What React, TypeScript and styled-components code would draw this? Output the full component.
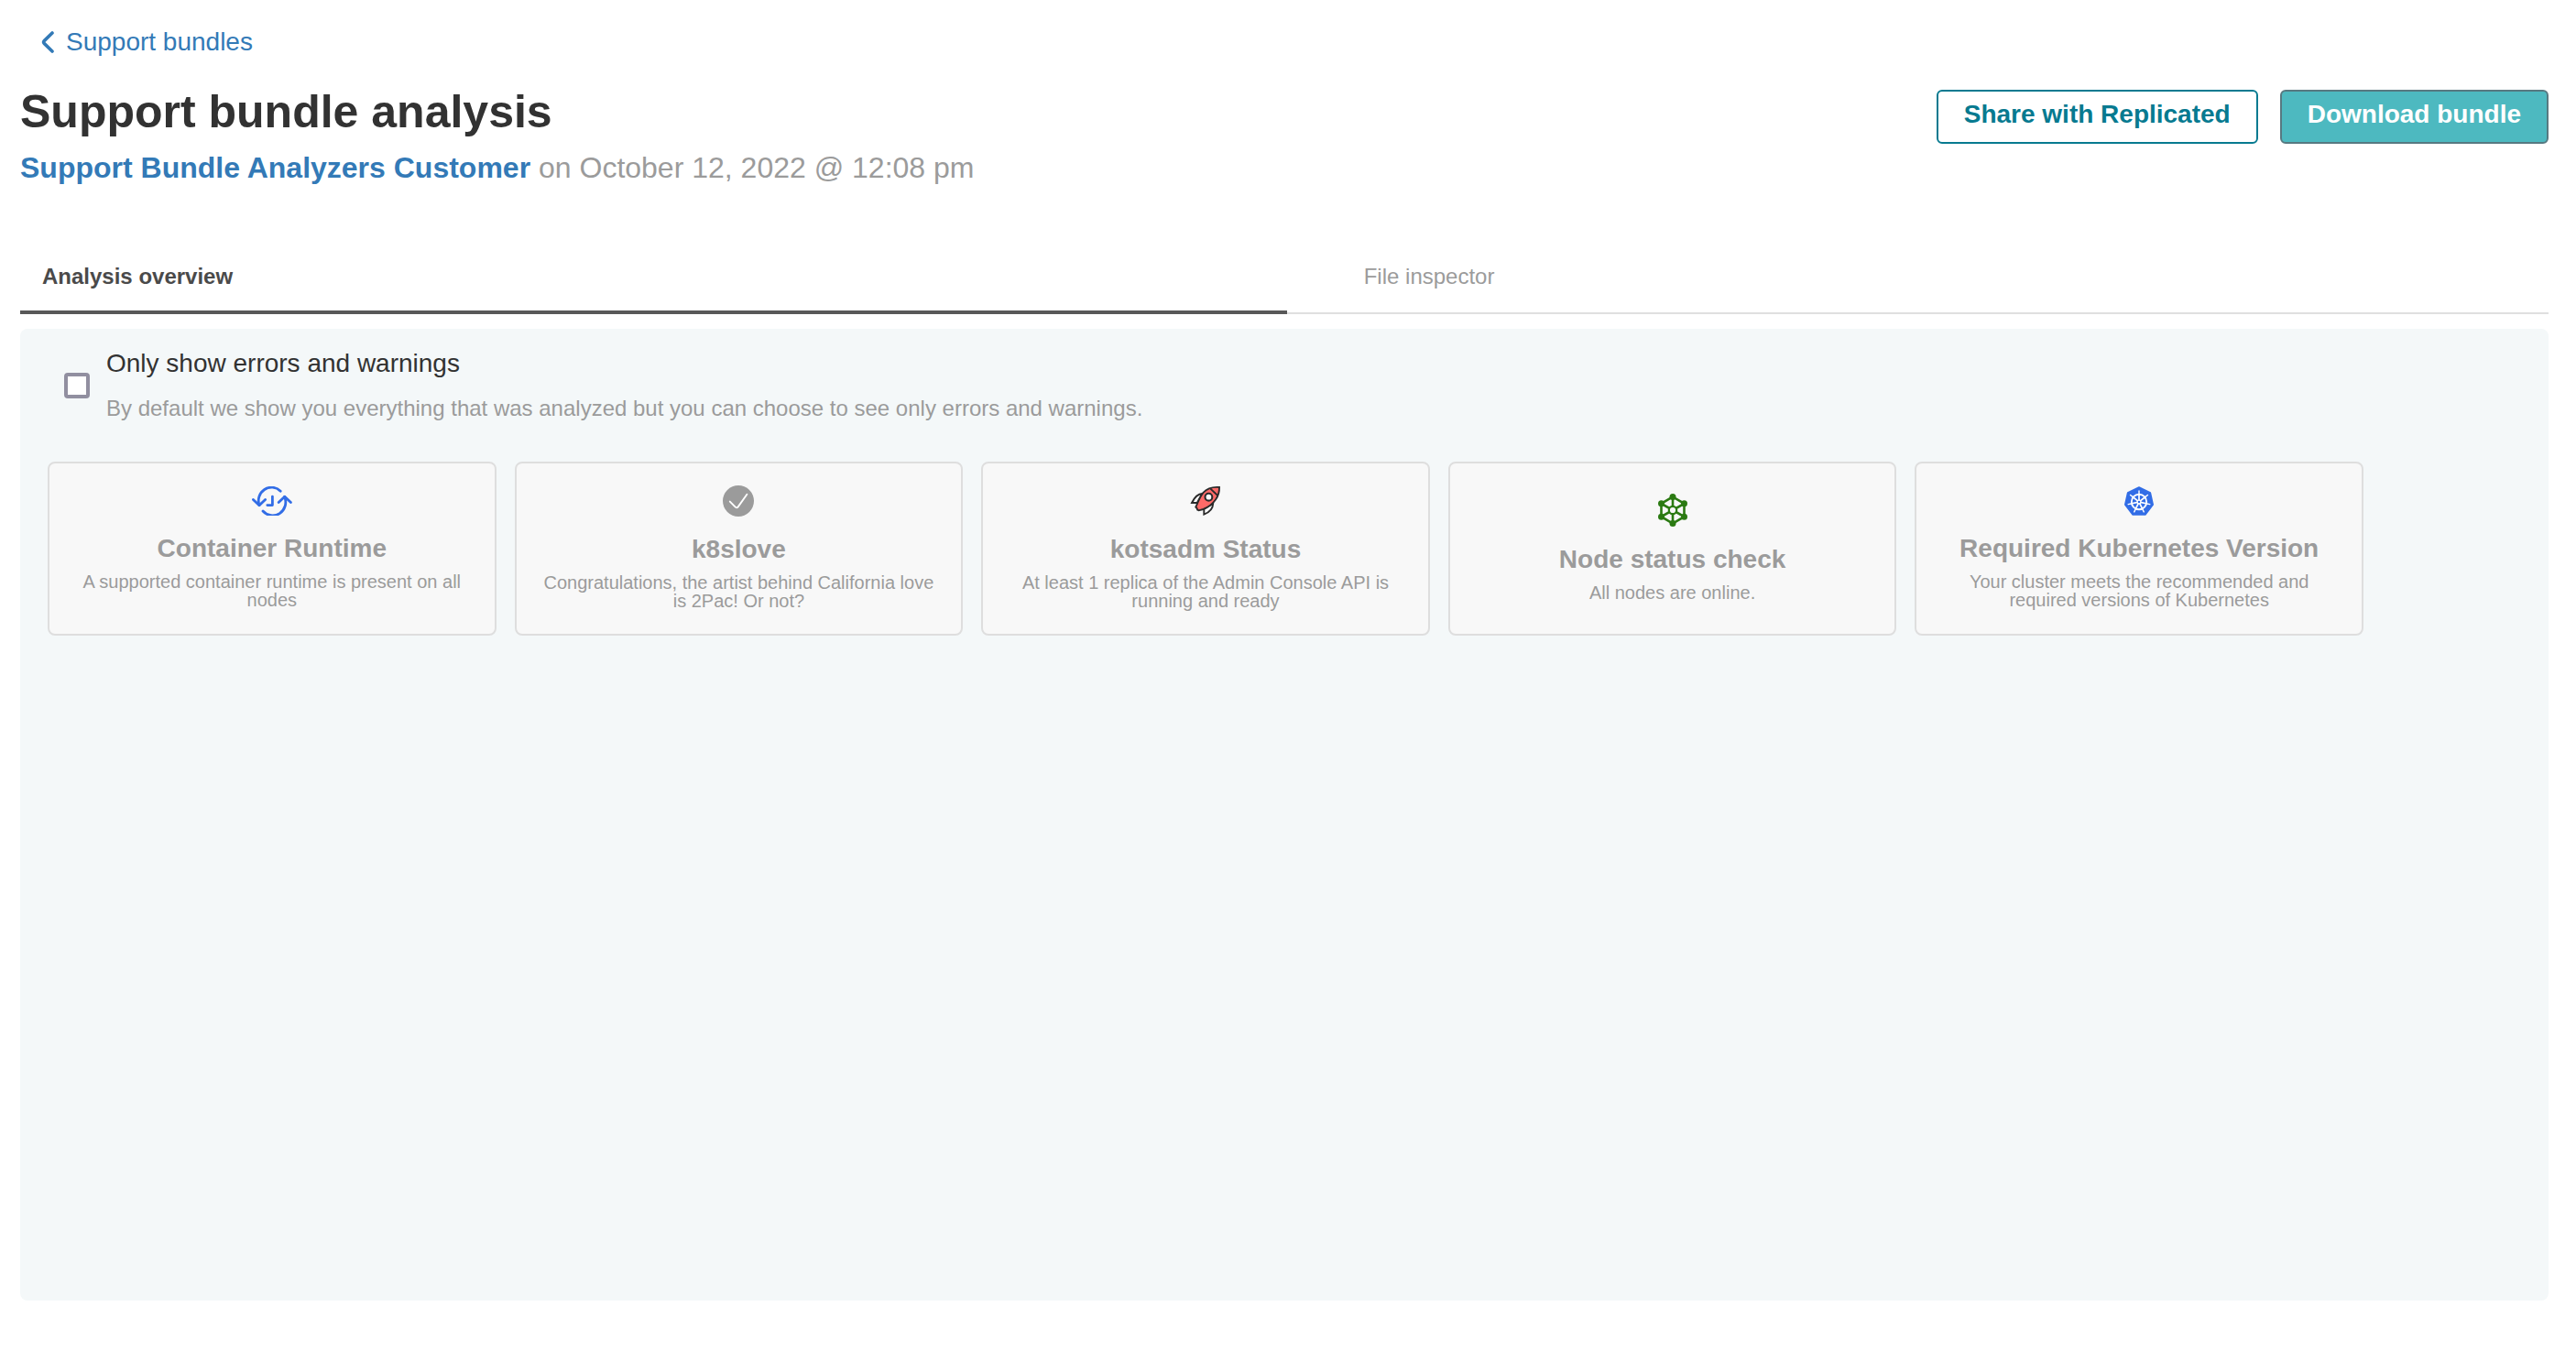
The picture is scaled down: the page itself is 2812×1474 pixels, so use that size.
import React, { useState } from "react";
import styled, { createGlobalStyle } from "styled-components";

const GlobalStyle = createGlobalStyle`
  *, *::before, *::after { box-sizing: border-box; }
  body {
    margin: 0;
    background: #ffffff;
    font-family: "Liberation Sans", Arial, Helvetica, sans-serif;
    -webkit-font-smoothing: antialiased;
  }
`;

const Page = styled.main`
  display: flex;
  flex-direction: column;
  min-height: 100vh;
  padding: 30px 30px 54px 22px;
`;

const BackLink = styled.a`
  display: flex;
  align-items: center;
  align-self: flex-start;
  gap: 13px;
  margin-left: 23px;
  font-size: 28px;
  line-height: 32px;
  color: #337ab7;
  text-decoration: none;
`;

const Header = styled.header`
  display: flex;
  justify-content: space-between;
  align-items: flex-start;
  margin-top: 30px;
`;

const Title = styled.h1`
  margin: 0;
  font-size: 50px;
  line-height: 60px;
  font-weight: 700;
  color: #323232;
`;

const Subtitle = styled.p`
  margin: 11px 0 0;
  font-size: 32px;
  line-height: 40px;
  color: #9b9b9b;
`;

const CustomerLink = styled.a`
  font-weight: 700;
  color: #337ab7;
  text-decoration: none;
`;

const Actions = styled.div`
  display: flex;
  gap: 24px;
  margin-top: 6px;
`;

const Button = styled.button<{ $primary?: boolean }>`
  padding: 11px 28px 16px;
  border: 2px solid ${(p) => (p.$primary ? "#577981" : "#077a90")};
  border-radius: 6px;
  background: ${(p) => (p.$primary ? "#4db9c0" : "#ffffff")};
  color: ${(p) => (p.$primary ? "#ffffff" : "#077a90")};
  font-family: inherit;
  font-size: 28px;
  line-height: 28px;
  font-weight: 700;
  cursor: pointer;
`;

const Tabs = styled.nav`
  display: flex;
  gap: 60px;
  margin-top: 83px;
  box-shadow: inset 0 -2px 0 #dfdfdf;
`;

const Tab = styled.button<{ $active: boolean }>`
  flex: 1 1 auto;
  padding: 0 24px 21px;
  border: 0;
  border-bottom: 4px solid ${(p) => (p.$active ? "#585858" : "transparent")};
  background: none;
  color: ${(p) => (p.$active ? "#4a4a4a" : "#9b9b9b")};
  font-family: inherit;
  font-size: 24px;
  line-height: 32px;
  font-weight: ${(p) => (p.$active ? 700 : 400)};
  text-align: left;
  cursor: pointer;
`;

const Panel = styled.section`
  flex: 1;
  margin-top: 16px;
  padding: 22px 20px;
  border-radius: 8px;
  background: #f4f8f9;
`;

const Filter = styled.label`
  display: flex;
  align-items: center;
  gap: 18px;
  width: fit-content;
  margin-left: 28px;
  cursor: pointer;
`;

const Checkbox = styled.input`
  appearance: none;
  width: 28px;
  height: 28px;
  margin: 0;
  border: 4px solid #918fa0;
  border-radius: 4px;
  background: #ffffff;

  &:checked {
    background: #337ab7;
  }
`;

const FilterText = styled.span`
  display: flex;
  flex-direction: column;
  gap: 19px;
`;

const FilterName = styled.span`
  font-size: 28px;
  line-height: 32px;
  color: #323232;
`;

const FilterHint = styled.span`
  font-size: 24px;
  line-height: 28px;
  color: #9b9b9b;
`;

const CardList = styled.ul`
  display: flex;
  flex-wrap: wrap;
  margin: 34px 0 0;
  padding: 0;
  list-style: none;
`;

const Card = styled.li`
  display: flex;
  flex-direction: column;
  align-items: center;
  justify-content: center;
  width: 18%;
  min-height: 190px;
  margin: 10px;
  padding: 16px 24px 18px;
  border: 2px solid #dedede;
  border-radius: 8px;
  background: #f8f8f8;
  color: #9b9b9b;
  text-align: center;

  svg { display: block; }
`;

const CardTitle = styled.h2`
  margin: 21px 0 11px;
  font-size: 28px;
  line-height: 30px;
  font-weight: 700;
`;

const CardText = styled.p`
  margin: 0;
  font-size: 20px;
  line-height: 20px;
`;

const ChevronIcon = () => (
  <svg width="14" height="24" viewBox="0 0 14 24" fill="none" aria-hidden="true">
    <path d="M12 2 3.2 10.6Q2 12 3.2 13.4L12 22" stroke="#337ab7" strokeWidth="3.6" strokeLinecap="round" strokeLinejoin="round" />
  </svg>
);

const RuntimeIcon = () => (
  <svg width="44" height="32" viewBox="0 0 44 32" fill="none" stroke="#326de6" strokeWidth="2.8" strokeLinecap="round" strokeLinejoin="round" aria-hidden="true">
    <path d="M31.2 5.2A14.2 14.6 0 0 0 8 20.600" />
    <path d="M1.4 14.4 8 20.800l6.6-6.4" />
    <path d="M12 27A14.2 14.6 0 0 0 35.600 11.400" />
    <path d="M29.2 17.6 35.800 11.200l6.6 6.4" />
    <path d="M22.4 11.2v9.4h-5.6" />
  </svg>
);

const CheckIcon = () => (
  <svg width="34" height="34" viewBox="0 0 34 34" fill="none" aria-hidden="true">
    <circle cx="17" cy="17" r="17" fill="#9b9b9b" />
    <path d="m7.8 17.6 6.2 6.2q1.4 1 2.5-.2L26.4 9.8" stroke="#ffffff" strokeWidth="1.9" strokeLinecap="round" strokeLinejoin="round" />
  </svg>
);

const RocketIcon = () => (
  <svg width="34" height="34" viewBox="0 0 34 34" stroke="#2b2b2b" strokeWidth="1.9" strokeLinejoin="miter" aria-hidden="true">
    <path d="M13.400 9C8 9.200 5 13 2 19h5.800Z" fill="#ffffff" />
    <path d="M25.200 20C25 26 21 29.500 15.300 31.600v-6Z" fill="#ffffff" />
    <path d="M32 2C24.500 1.400 19 3 14.500 7.800 10.500 12.500 9 18 6.300 23.600L7.600 25l.5 1.500 1.500.8L14.500 26C20.500 23.500 24.500 20.500 28 15.500 31.200 11 32.200 7.500 32 2Z" fill="#ff6a68" />
    <path d="m22.400 3.600 7.800 7.400" fill="none" />
    <circle cx="20.400" cy="12.700" r="3.900" fill="#ffffff" strokeWidth="2.100" />
  </svg>
);

const HEX_POINTS = [
  [18, 3.5],
  [30.5, 10.8],
  [30.5, 25.2],
  [18, 32.5],
  [5.5, 25.2],
  [5.5, 10.8],
];

const NodesIcon = () => (
  <svg width="36" height="36" viewBox="0 0 36 36" stroke="#2b7a12" strokeWidth="2.6" fill="none" aria-hidden="true">
    <polygon points={HEX_POINTS.map((p) => p.join(",")).join(" ")} />
    {HEX_POINTS.map(([x, y]) => (
      <g key={`${x}-${y}`}>
        <path d={`M18 18 ${x} ${y}`} />
        <circle cx={x} cy={y} r="3.5" fill="#2b7a12" stroke="none" />
      </g>
    ))}
    <circle cx="18" cy="18" r="4.2" fill="#f8f8f8" strokeWidth="2.2" />
  </svg>
);

const KubernetesIcon = () => (
  <svg width="32" height="32" viewBox="0 0 32 32" fill="none" aria-hidden="true">
    <path d="M16 1 28.3 6.9 31.2 20 22.8 31H9.2L.8 20 3.7 6.9Z" fill="#326de6" stroke="#326de6" strokeWidth="1.6" strokeLinejoin="round" />
    <g stroke="#ffffff" strokeLinecap="round">
      <circle cx="16" cy="17" r="8.2" strokeWidth="1.9" />
      {Array.from({ length: 7 }, (_, i) => (
        <g key={i} transform={`rotate(${(i * 360) / 7} 16 17)`}>
          <path d="M16 8V4.9" strokeWidth="1.4" />
          <path d="M16 15.6V9" strokeWidth="1.7" />
        </g>
      ))}
      <circle cx="16" cy="17" r="1.9" fill="#326de6" strokeWidth="1.3" />
    </g>
  </svg>
);

const analyzers = [
  { title: "Container Runtime", text: "A supported container runtime is present on all nodes", Icon: RuntimeIcon },
  { title: "k8slove", text: "Congratulations, the artist behind California love is 2Pac! Or not?", Icon: CheckIcon },
  { title: "kotsadm Status", text: "At least 1 replica of the Admin Console API is running and ready", Icon: RocketIcon },
  { title: "Node status check", text: "All nodes are online.", Icon: NodesIcon },
  { title: "Required Kubernetes Version", text: "Your cluster meets the recommended and required versions of Kubernetes", Icon: KubernetesIcon },
];

const tabs = ["Analysis overview", "File inspector"];

export default function App() {
  const [activeTab, setActiveTab] = useState(tabs[0]);
  const [onlyProblems, setOnlyProblems] = useState(false);

  return (
    <>
      <GlobalStyle />
      <Page>
        <BackLink href="#bundles">
          <ChevronIcon />
          Support bundles
        </BackLink>
        <Header>
          <div>
            <Title>Support bundle analysis</Title>
            <Subtitle>
              <CustomerLink href="#customer">Support Bundle Analyzers Customer</CustomerLink> on October 12, 2022 @ 12:08 pm
            </Subtitle>
          </div>
          <Actions>
            <Button type="button">Share with Replicated</Button>
            <Button type="button" $primary>
              Download bundle
            </Button>
          </Actions>
        </Header>
        <Tabs>
          {tabs.map((name) => (
            <Tab key={name} type="button" $active={name === activeTab} onClick={() => setActiveTab(name)}>
              {name}
            </Tab>
          ))}
        </Tabs>
        <Panel>
          <Filter htmlFor="only-problems">
            <Checkbox
              id="only-problems"
              type="checkbox"
              checked={onlyProblems}
              onChange={(e) => setOnlyProblems(e.target.checked)}
            />
            <FilterText>
              <FilterName>Only show errors and warnings</FilterName>
              <FilterHint>
                By default we show you everything that was analyzed but you can choose to see only errors and warnings.
              </FilterHint>
            </FilterText>
          </Filter>
          <CardList>
            {analyzers.map(({ title, text, Icon }) => (
              <Card key={title}>
                <Icon />
                <CardTitle>{title}</CardTitle>
                <CardText>{text}</CardText>
              </Card>
            ))}
          </CardList>
        </Panel>
      </Page>
    </>
  );
}
